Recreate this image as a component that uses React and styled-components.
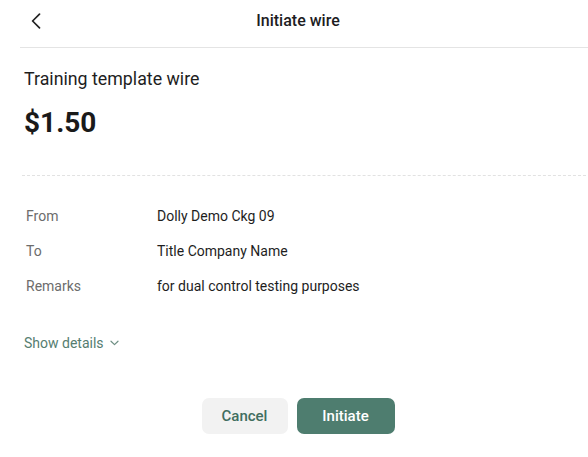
import React from "react"
import styled, { createGlobalStyle } from "styled-components"

const GlobalStyle = createGlobalStyle`
  html, body {
    margin: 0;
    padding: 0;
    background: #ffffff;
    overflow: hidden;
  }
  body {
    font-family: Roboto, "Liberation Sans", Arial, sans-serif;
    color: #1c1c1c;
  }
`

const Page = styled.div`
  width: 596px;
  min-height: 457px;
  background: #fff;
`

const Header = styled.header`
  position: relative;
  height: 42px;
  display: flex;
  align-items: center;
  justify-content: center;
`

const BackButton = styled.button`
  position: absolute;
  left: 30px;
  top: 13px;
  width: 12px;
  height: 16px;
  padding: 0;
  border: 0;
  background: none;
  cursor: pointer;
  display: flex;
`

const Title = styled.h1`
  margin: 0;
  font-size: 16px;
  line-height: 24px;
  font-weight: 500;
  color: #1d1d1f;
`

const Rule = styled.div`
  margin: 5px 0 0 20px;
  border-top: 1px solid #e4e4e4;
`

const Summary = styled.section`
  padding: 19px 0 0 24px;
`

const Name = styled.div`
  font-size: 17.8px;
  line-height: 24px;
  color: #1e1e1e;
`

const Amount = styled.div`
  margin-top: 14px;
  font-size: 28px;
  line-height: 36px;
  font-weight: 700;
  color: #1a1a1a;
`

const Dashed = styled.div`
  margin: 34px 0 0 22px;
  border-top: 1px dashed #e2e2e2;
`

const Body = styled.section`
  padding-left: 24px;
`

const Details = styled.dl`
  margin: 30px 0 0 2px;
  display: grid;
  grid-template-columns: 131px 1fr;
  row-gap: 15px;
  font-size: 14px;
  line-height: 20px;
`

const Label = styled.dt`
  margin: 0;
  color: #6c6c6c;
`

const Value = styled.dd`
  margin: 0;
  color: #1e1e1e;
`

const ShowDetails = styled.button`
  margin-top: 37px;
  padding: 0;
  border: 0;
  background: none;
  display: flex;
  align-items: center;
  gap: 6px;
  font-family: inherit;
  font-size: 14px;
  line-height: 20px;
  color: #557d70;
  cursor: pointer;
`

const Actions = styled.div`
  margin-top: 45px;
  display: flex;
  justify-content: center;
  gap: 9px;
`

const Button = styled.button`
  height: 36px;
  min-width: ${p => p.$minWidth}px;
  padding: 0 19px;
  border: 0;
  border-radius: 7px;
  font-family: inherit;
  font-size: 15px;
  font-weight: 500;
  background: ${p => (p.$primary ? "#4e7d6f" : "#f2f2f2")};
  color: ${p => (p.$primary ? "#ffffff" : "#416e60")};
  cursor: pointer;
`

const rows = [
  ["From", "Dolly Demo Ckg 09"],
  ["To", "Title Company Name"],
  ["Remarks", "for dual control testing purposes"],
]

const App = () => (
  <Page>
    <GlobalStyle />
    <Header>
      <BackButton aria-label="Back">
        <svg width="12" height="16" viewBox="0 0 12 16" fill="none">
          <path d="M9.5 1.2 L2.6 8 L9.5 14.8" stroke="#222" strokeWidth="1.7" strokeLinecap="round" strokeLinejoin="round" />
        </svg>
      </BackButton>
      <Title>Initiate wire</Title>
    </Header>
    <Rule />
    <Summary>
      <Name>Training template wire</Name>
      <Amount>$1.50</Amount>
    </Summary>
    <Dashed />
    <Body>
      <Details>
        {rows.map(([label, value]) => (
          <React.Fragment key={label}>
            <Label>{label}</Label>
            <Value>{value}</Value>
          </React.Fragment>
        ))}
      </Details>
      <ShowDetails>
        Show details
        <svg width="9" height="6" viewBox="0 0 9 6" fill="none">
          <path d="M1 1.2 L4.5 4.6 L8 1.2" stroke="#6f8f84" strokeWidth="1.2" strokeLinecap="round" strokeLinejoin="round" />
        </svg>
      </ShowDetails>
    </Body>
    <Actions>
      <Button $minWidth={86}>Cancel</Button>
      <Button $primary $minWidth={98}>Initiate</Button>
    </Actions>
  </Page>
)

export default App
